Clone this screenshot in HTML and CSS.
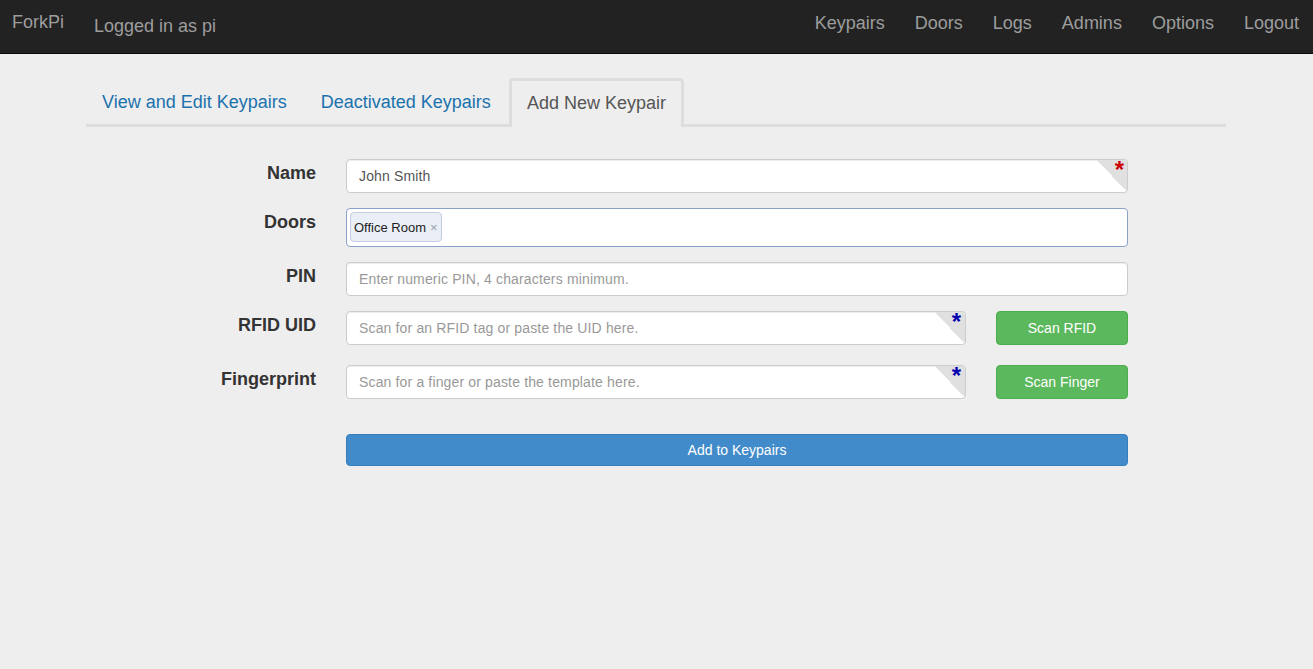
FILE: index.html
```html
<!DOCTYPE html>
<html lang="en">
<head>
<meta charset="utf-8">
<title>ForkPi - Add New Keypair</title>
<link rel="stylesheet" href="styles.css">
</head>
<body>
<nav class="navbar">
  <a class="brand" href="#">ForkPi</a>
  <span class="user">Logged in as pi</span>
  <ul class="nav-links">
    <li><a href="#">Keypairs</a></li>
    <li><a href="#">Doors</a></li>
    <li><a href="#">Logs</a></li>
    <li><a href="#">Admins</a></li>
    <li><a href="#">Options</a></li>
    <li><a href="#">Logout</a></li>
  </ul>
</nav>

<div class="container">
  <ul class="tabs">
    <li><a href="#">View and Edit Keypairs</a></li>
    <li><a href="#">Deactivated Keypairs</a></li>
    <li class="active"><a href="#">Add New Keypair</a></li>
  </ul>

  <form class="form">
    <div class="row">
      <label class="label">Name</label>
      <div class="field">
        <div class="input-wrap">
          <input class="input" type="text" value="John Smith">
          <span class="corner"></span>
          <span class="star red">*</span>
        </div>
      </div>
    </div>

    <div class="row">
      <label class="label">Doors</label>
      <div class="field">
        <div class="select">
          <span class="tag">Office Room<span class="tag-x">×</span></span>
        </div>
      </div>
    </div>

    <div class="row">
      <label class="label">PIN</label>
      <div class="field">
        <div class="input-wrap">
          <input class="input" type="text" placeholder="Enter numeric PIN, 4 characters minimum.">
        </div>
      </div>
    </div>

    <div class="row row-wide">
      <label class="label">RFID UID</label>
      <div class="field">
        <div class="input-wrap">
          <input class="input" type="text" placeholder="Scan for an RFID tag or paste the UID here.">
          <span class="corner"></span>
          <span class="star blue">*</span>
        </div>
        <button class="btn btn-success" type="button">Scan RFID</button>
      </div>
    </div>

    <div class="row">
      <label class="label">Fingerprint</label>
      <div class="field">
        <div class="input-wrap">
          <input class="input" type="text" placeholder="Scan for a finger or paste the template here.">
          <span class="corner"></span>
          <span class="star blue">*</span>
        </div>
        <button class="btn btn-success" type="button">Scan Finger</button>
      </div>
    </div>

    <div class="row row-submit">
      <span class="label"></span>
      <div class="field">
        <button class="btn btn-primary btn-block" type="button">Add to Keypairs</button>
      </div>
    </div>
  </form>
</div>
</body>
</html>
```

FILE: styles.css
```css
html, body {
  margin: 0;
  padding: 0;
}

body {
  background: #eeeeee;
  font-family: "Liberation Sans", Arial, Helvetica, sans-serif;
  font-size: 14px;
  color: #333333;
}

/* Navbar */
.navbar {
  display: flex;
  align-items: flex-start;
  height: 53px;
  background: #222222;
  border-bottom: 1px solid #080808;
}

.brand {
  padding: 12px 15px 0 12px;
  font-size: 18px;
  line-height: 21px;
  color: #9d9d9d;
  text-decoration: none;
}

.user {
  padding: 16px 0 0 15px;
  font-size: 18px;
  line-height: 20px;
  color: #9d9d9d;
}

.nav-links {
  display: flex;
  margin: 0 -1px 0 auto;
  padding: 0;
  list-style: none;
}

.nav-links a {
  display: block;
  padding: 13px 15px 0;
  font-size: 18px;
  line-height: 21px;
  color: #9d9d9d;
  text-decoration: none;
}

/* Container + tabs */
.container {
  width: 1140px;
  margin: 24px 0 0 calc((100% - 1141px) / 2);
}

.tabs {
  display: flex;
  align-items: flex-start;
  margin: 0;
  padding: 0;
  list-style: none;
  border-bottom: 3px solid #dddddd;
}

.tabs li {
  margin-right: 2px;
}

.tabs a {
  display: block;
  padding: 12px 15px 8px;
  font-size: 18px;
  line-height: 23px;
  border: 1px solid transparent;
  border-radius: 4px 4px 0 0;
  color: #1a72ad;
  text-decoration: none;
}

.tabs li.active {
  margin-bottom: -3px;
}

.tabs li.active a {
  border: 3px solid #dddddd;
  border-bottom: 0;
  padding: 11px 15px 12px;
  background: #eeeeee;
  color: #555555;
}

/* Form */
.form {
  margin-top: 32px;
}

.row {
  display: flex;
  align-items: flex-start;
  margin-bottom: 15px;
}

.row-wide {
  margin-bottom: 20px;
}

.row-submit {
  margin-top: 35px;
}

.label {
  box-sizing: border-box;
  width: 230px;
  flex: 0 0 230px;
  padding-top: 2px;
  text-align: right;
  font-size: 18px;
  line-height: 25px;
  font-weight: bold;
  color: #333333;
}

.field {
  display: flex;
  width: 782px;
  margin-left: 30px;
}

.input-wrap {
  position: relative;
  flex: 1;
}

.input {
  box-sizing: border-box;
  display: block;
  width: 100%;
  height: 34px;
  margin: 0;
  padding: 6px 12px;
  border: 1px solid #cccccc;
  border-radius: 4px;
  background: #ffffff;
  box-shadow: inset 0 1px 1px rgba(0, 0, 0, 0.075);
  font-family: "Liberation Sans", Arial, Helvetica, sans-serif;
  font-size: 14px;
  letter-spacing: 0.15px;
  color: #555555;
  outline: none;
}

.input::placeholder {
  color: #999999;
  opacity: 1;
}

.corner {
  position: absolute;
  top: 1px;
  right: 1px;
  width: 30px;
  height: 32px;
  border-top-right-radius: 3px;
  background: linear-gradient(to top right, transparent 50%, #e0e0e0 50%);
  pointer-events: none;
}

.star {
  position: absolute;
  top: -1px;
  right: 4px;
  font-size: 24px;
  line-height: 24px;
  font-weight: bold;
  pointer-events: none;
}

.star.red {
  color: #cc0000;
}

.star.blue {
  color: #0000b0;
  right: 5px;
}

/* Doors multi-select */
.select {
  box-sizing: border-box;
  display: flex;
  align-items: flex-start;
  width: 100%;
  height: 39px;
  padding: 3px 3px;
  border: 1px solid #8aa1c9;
  border-radius: 4px;
  background: #ffffff;
}

.tag {
  display: inline-flex;
  align-items: center;
  height: 30px;
  box-sizing: border-box;
  padding: 0 3px 0 3px;
  border: 1px solid #c4cde0;
  border-radius: 4px;
  background: #eaeef6;
  font-size: 13px;
  color: #222222;
}

.tag-x {
  margin-left: 4px;
  font-size: 13px;
  color: #9aa0aa;
}

/* Buttons */
.btn {
  box-sizing: border-box;
  height: 34px;
  margin: 0;
  padding: 0 12px;
  border: 1px solid transparent;
  border-radius: 4px;
  font-family: "Liberation Sans", Arial, Helvetica, sans-serif;
  font-size: 14px;
  color: #ffffff;
  cursor: pointer;
}

.btn-success {
  flex: 0 0 132px;
  width: 132px;
  margin-left: 30px;
  background: #5cb85c;
  border-color: #4cae4c;
}

.btn-primary {
  background: #428bca;
  border-color: #357ebd;
}

.btn-block {
  width: 100%;
  height: 32px;
}
```
